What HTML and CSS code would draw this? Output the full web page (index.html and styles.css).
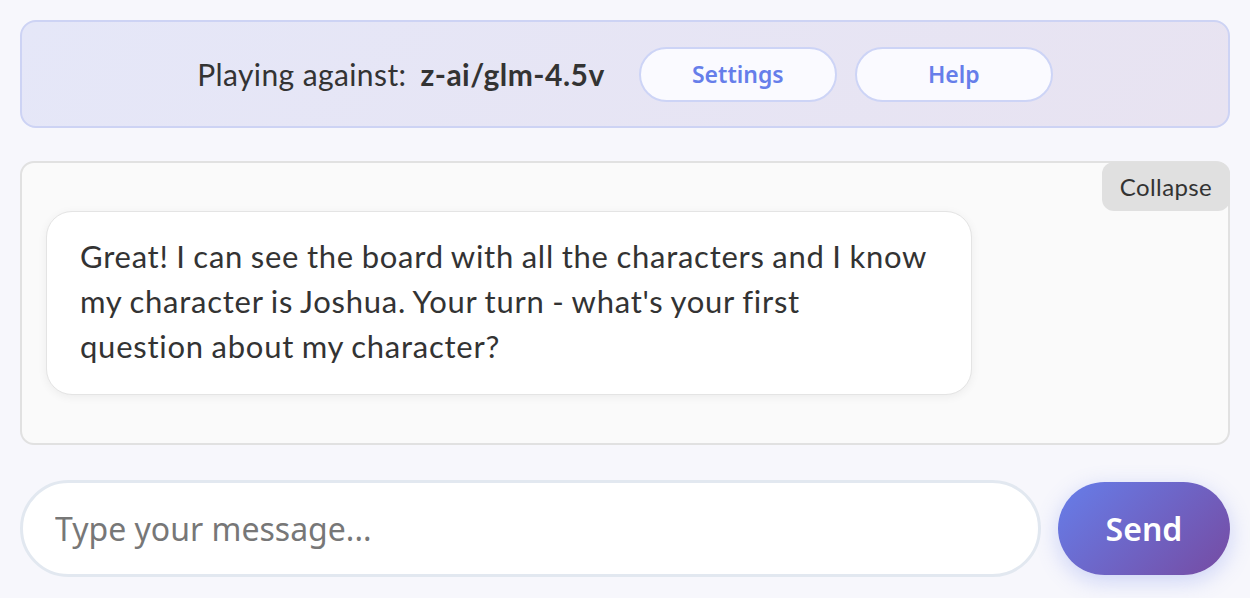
FILE: index.html
```html
<!DOCTYPE html>
<html>
<head>
<meta charset="utf-8">
<link rel="stylesheet" href="styles.css">
</head>
<body>
<div class="page">
  <header class="topbar">
    <div class="opponent">Playing against: <strong class="model">z-ai/glm-4.5v</strong></div>
    <button class="pill">Settings</button>
    <button class="pill">Help</button>
  </header>
  <section class="chat">
    <div class="chat-head"><button class="collapse">Collapse</button></div>
    <div class="bubble">Great! I can see the board with all the characters and I know my character is Joshua. Your turn - what's your first question about my character?</div>
  </section>
  <div class="composer">
    <input class="message" type="text" placeholder="Type your message...">
    <button class="send">Send</button>
  </div>
</div>
</body>
</html>
```

FILE: styles.css
```css
* { box-sizing: border-box; }
html, body { margin: 0; padding: 0; }
body {
  background: #f7f7fc;
  font-family: Lato, "Noto Sans", sans-serif;
  color: #333;
  width: 1250px;
  height: 598px;
  overflow: hidden;
}
.page {
  padding: 20px 20px 0 20px;
  display: flex;
  flex-direction: column;
}
.topbar {
  height: 108px;
  border: 2px solid #cdd3f4;
  border-radius: 16px;
  background: linear-gradient(135deg, #e5e7f8 0%, #e8e3f1 100%);
  display: flex;
  align-items: center;
  justify-content: center;
  gap: 18px;
}
.opponent {
  font-size: 30px;
  letter-spacing: 0.4px;
  color: #333;
  margin-right: 16px;
  white-space: pre;
}
.model { font-weight: 700; margin-left: 6px; letter-spacing: 0.5px; }
.pill {
  width: 198px;
  height: 55px;
  border-radius: 28px;
  border: 2px solid #cdd4f6;
  background: #fafaff;
  color: #667eea;
  font-family: "Noto Sans", sans-serif;
  font-size: 23px;
  font-weight: 600;
  padding: 0;
}
.chat {
  margin-top: 33px;
  height: 284px;
  border: 2px solid #e1e1e1;
  border-radius: 14px;
  background: #fafafa;
  display: flex;
  flex-direction: column;
  align-items: flex-start;
  padding: 0 0 0 24px;
}
.chat-head {
  align-self: stretch;
  display: flex;
  justify-content: flex-end;
  margin-top: -1px;
  margin-right: -2px;
}
.collapse {
  height: 49px;
  width: 128px;
  border: none;
  border-radius: 12px;
  background: #e0e0e0;
  color: #333;
  font-family: Lato, "Noto Sans", sans-serif;
  font-size: 24px;
  letter-spacing: 0.4px;
  padding: 0;
}
.bubble {
  width: 926px;
  height: 184px;
  background: #fff;
  border: 1px solid #e4e4e4;
  border-radius: 26px;
  box-shadow: 0 2px 10px rgba(0,0,0,0.06);
  padding: 22px 42px 0 33px;
  font-size: 31px;
  letter-spacing: 0.75px;
  word-spacing: -1px;
  line-height: 45px;
  color: #333;
}
.composer {
  margin-top: 35px;
  display: flex;
  align-items: center;
  gap: 17px;
}
.message {
  width: 1021px;
  height: 97px;
  border: 3px solid #e2e8f0;
  border-radius: 49px;
  background: #fff;
  padding: 0 32px;
  font-family: "Noto Sans", sans-serif;
  font-size: 32px;
  color: #333;
  outline: none;
}
.message::placeholder { color: #777; }
.send {
  width: 172px;
  height: 93px;
  border: none;
  border-radius: 47px;
  background: linear-gradient(135deg, #667eea 0%, #764ba2 100%);
  color: #fff;
  font-family: "Noto Sans", sans-serif;
  font-size: 32px;
  font-weight: 600;
  box-shadow: 0 6px 22px rgba(102,126,234,0.3);
  padding: 0;
}
```
